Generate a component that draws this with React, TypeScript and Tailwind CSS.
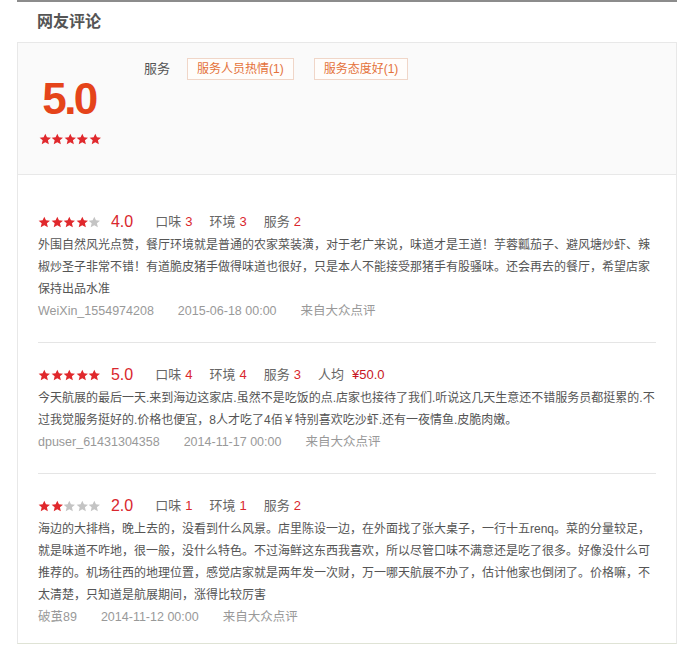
import React from 'react';

type Review = {
  user: string;
  date: string;
  stars: number;
  score: string;
  taste: number;
  env: number;
  service: number;
  avg?: string;
  text: string;
};

const reviews: Review[] = [
  {
    user: 'WeiXin_1554974208',
    date: '2015-06-18 00:00',
    stars: 4,
    score: '4.0',
    taste: 3,
    env: 3,
    service: 2,
    text: '外围自然风光点赞，餐厅环境就是普通的农家菜装潢，对于老广来说，味道才是王道！芋蓉瓤茄子、避风塘炒虾、辣椒炒圣子非常不错！有道脆皮猪手做得味道也很好，只是本人不能接受那猪手有股骚味。还会再去的餐厅，希望店家保持出品水准',
  },
  {
    user: 'dpuser_61431304358',
    date: '2014-11-17 00:00',
    stars: 5,
    score: '5.0',
    taste: 4,
    env: 4,
    service: 3,
    avg: '¥50.0',
    text: '今天航展的最后一天.来到海边这家店.虽然不是吃饭的点.店家也接待了我们.听说这几天生意还不错服务员都挺累的.不过我觉服务挺好的.价格也便宜，8人才吃了4佰￥特别喜欢吃沙虾.还有一夜情鱼.皮脆肉嫩。',
  },
  {
    user: '破茧89',
    date: '2014-11-12 00:00',
    stars: 2,
    score: '2.0',
    taste: 1,
    env: 1,
    service: 2,
    text: '海边的大排档，晚上去的，没看到什么风景。店里陈设一边，在外面找了张大桌子，一行十五renq。菜的分量较足，就是味道不咋地，很一般，没什么特色。不过海鲜这东西我喜欢，所以尽管口味不满意还是吃了很多。好像没什么可推荐的。机场往西的地理位置，感觉店家就是两年发一次财，万一哪天航展不办了，估计他家也倒闭了。价格嘛，不太清楚，只知道是航展期间，涨得比较厉害',
  },
];

const Star = ({ on }: { on: boolean }) => (
  <svg viewBox="0 0 24 24" className="w-[12.6px] h-[12.6px] flex-none">
    <path
      d="M12 1.2l3.2 7 7.6.7-5.8 5.1 1.8 7.6L12 17.7l-6.8 3.9 1.8-7.6-5.8-5.1 7.6-.7z"
      fill={on ? '#e0282c' : '#c4c4c4'}
    />
  </svg>
);

const Stars = ({ n }: { n: number }) => (
  <div className="flex">
    {[1, 2, 3, 4, 5].map((i) => (
      <Star key={i} on={i <= n} />
    ))}
  </div>
);

const Item = ({ label, value }: { label: string; value: number }) => (
  <span className="mr-[17px] text-[13px] text-[#666]">
    {label}
    <span className="ml-[4px] text-[#d9272e]">{value}</span>
  </span>
);

const App: React.FC = () => {
  return (
    <div className="min-h-screen bg-white font-['Liberation_Sans','Noto_Sans_CJK_SC',sans-serif]">
      <div className="ml-[17px] w-[660px] border-t-2 border-[#8c8c8c]">
        <div className="h-[40px] pl-[20px] flex items-center">
          <h2 className="text-[16px] font-bold text-[#555]">网友评论</h2>
        </div>

        <div className="border border-[#e8e8e8] bg-[#fafafa] h-[133px] flex pl-[20px]">
          <div className="w-[64px] flex flex-col items-center pt-[34px]">
            <div className="text-[44px] leading-[44px] font-bold text-[#e5441a] tracking-[-2.5px] pr-[2px]">
              5.0
            </div>
            <div className="mt-[12px]">
              <Stars n={5} />
            </div>
          </div>
          <div className="ml-[42px] pt-[15px] flex items-center h-[37px] self-start">
            <span className="text-[13px] text-[#555] mr-[17px]">服务</span>
            <span className="h-[22px] px-[9px] flex items-center border border-[#f0d6c8] bg-[#fffdfb] text-[12px] text-[#e4723a] mr-[20px]">
              服务人员热情(1)
            </span>
            <span className="h-[22px] px-[9px] flex items-center border border-[#f0d6c8] bg-[#fffdfb] text-[12px] text-[#e4723a]">
              服务态度好(1)
            </span>
          </div>
        </div>

        <div className="border-x border-b border-x-[#e8e8e8] border-b-[#dfe3d5] px-[20px] pt-[15px]">
          {reviews.map((r, idx) => (
            <div
              key={r.user}
              className={
                idx === reviews.length - 1
                  ? 'pt-[20px] pb-[15px]'
                  : 'pt-[20px] pb-[20px] border-b border-[#e5e5e5]'
              }
            >
              <div className="h-[24px] flex items-center">
                <Stars n={r.stars} />
                <span className="ml-[10px] text-[16px] text-[#d9272e] mr-[22px]">{r.score}</span>
                <Item label="口味" value={r.taste} />
                <Item label="环境" value={r.env} />
                <Item label="服务" value={r.service} />
                {r.avg && (
                  <span className="text-[13px] text-[#666]">
                    人均<span className="ml-[8px] text-[#c81623]">{r.avg}</span>
                  </span>
                )}
              </div>
              <p className="text-[12px] leading-[22px] text-[#555]">{r.text}</p>
              <div className="text-[12.5px] leading-[22px] text-[#999] flex">
                <span className="mr-[24px]">{r.user}</span>
                <span className="mr-[24px]">{r.date}</span>
                <span>来自大众点评</span>
              </div>
            </div>
          ))}
        </div>
      </div>
    </div>
  );
};

export default App;
